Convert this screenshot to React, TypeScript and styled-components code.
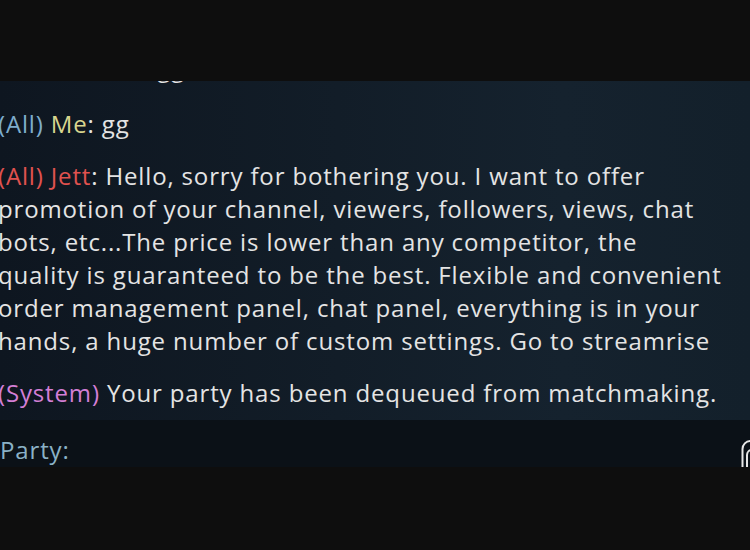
import React from "react";
import styled, { createGlobalStyle } from "styled-components";

const Global = createGlobalStyle`
  html, body { margin: 0; padding: 0; background: #0e0e0e; }
  body { width: 750px; height: 550px; overflow: hidden; }
`;

const Screen = styled.div`
  width: 750px;
  height: 550px;
  background: #0e0e0e;
  padding-top: 81px;
  box-sizing: border-box;
`;

const Panel = styled.div`
  height: 386px;
  display: flex;
  flex-direction: column;
  overflow: hidden;
  font-family: "Open Sans", "DejaVu Sans", sans-serif;
  font-size: 24px;
  font-weight: 500;
  letter-spacing: 0.85px;
`;

const Log = styled.div`
  height: 339px;
  display: flex;
  flex-direction: column;
  justify-content: flex-end;
  gap: 19px;
  padding: 0 0 11px 0;
  box-sizing: border-box;
  overflow: hidden;
  background: linear-gradient(90deg, #0e1620 0%, #121d28 45%, #15222e 75%, #13202b 100%);
`;

const Message = styled.div<{ $extra?: number }>`
  line-height: 33px;
  color: #e4e4e4;
  margin-left: -2px;
  white-space: nowrap;
  margin-bottom: ${(p) => p.$extra ?? 0}px;
`;

const Line = styled.div``;

const Tag = styled.span<{ $color: string }>`
  color: ${(p) => p.$color};
`;

const InputBar = styled.div`
  flex: 1;
  display: flex;
  align-items: flex-end;
  justify-content: space-between;
  background: #0b1117;
`;

const PartyLabel = styled.div`
  color: #8ab1c6;
  line-height: 33px;
  margin-bottom: 1px;
`;

const IconClip = styled.div`
  width: 9px;
  height: 28px;
  overflow: hidden;
`;

const KeyIcon = () => (
  <svg width="30" height="30" viewBox="0 0 30 30" fill="none" stroke="#e8e8e8" strokeWidth="2">
    <path d="M1.5 30 V10 a8 8 0 0 1 8 -8 H22" />
    <path d="M6 30 V16 a5 5 0 0 1 5 -5 H20" />
  </svg>
);

const BLUE = "#7eadcc";
const RED = "#e0524f";

export default function App() {
  return (
    <>
      <Global />
      <Screen>
        <Panel>
          <Log>
            <Message $extra={4}>
              <Line>
                <Tag $color={BLUE}>(Team)</Tag> <Tag $color="#d8d68f">Sova</Tag>: gg
              </Line>
            </Message>
            <Message>
              <Line>
                <Tag $color={BLUE}>(All)</Tag> <Tag $color="#d8d68f">Me</Tag>: gg
              </Line>
            </Message>
            <Message>
              <Line>
                <Tag $color={RED}>(All) Jett</Tag>: Hello, sorry for bothering you. I want to offer
              </Line>
              <Line>promotion of your channel, viewers, followers, views, chat</Line>
              <Line>bots, etc...The price is lower than any competitor, the</Line>
              <Line>quality is guaranteed to be the best. Flexible and convenient</Line>
              <Line>order management panel, chat panel, everything is in your</Line>
              <Line>hands, a huge number of custom settings. Go to streamrise</Line>
            </Message>
            <Message>
              <Line>
                <Tag $color="#d47fd6">(System)</Tag> Your party has been dequeued from matchmaking.
              </Line>
            </Message>
          </Log>
          <InputBar>
            <PartyLabel>Party:</PartyLabel>
            <IconClip>
              <KeyIcon />
            </IconClip>
          </InputBar>
        </Panel>
      </Screen>
    </>
  );
}
